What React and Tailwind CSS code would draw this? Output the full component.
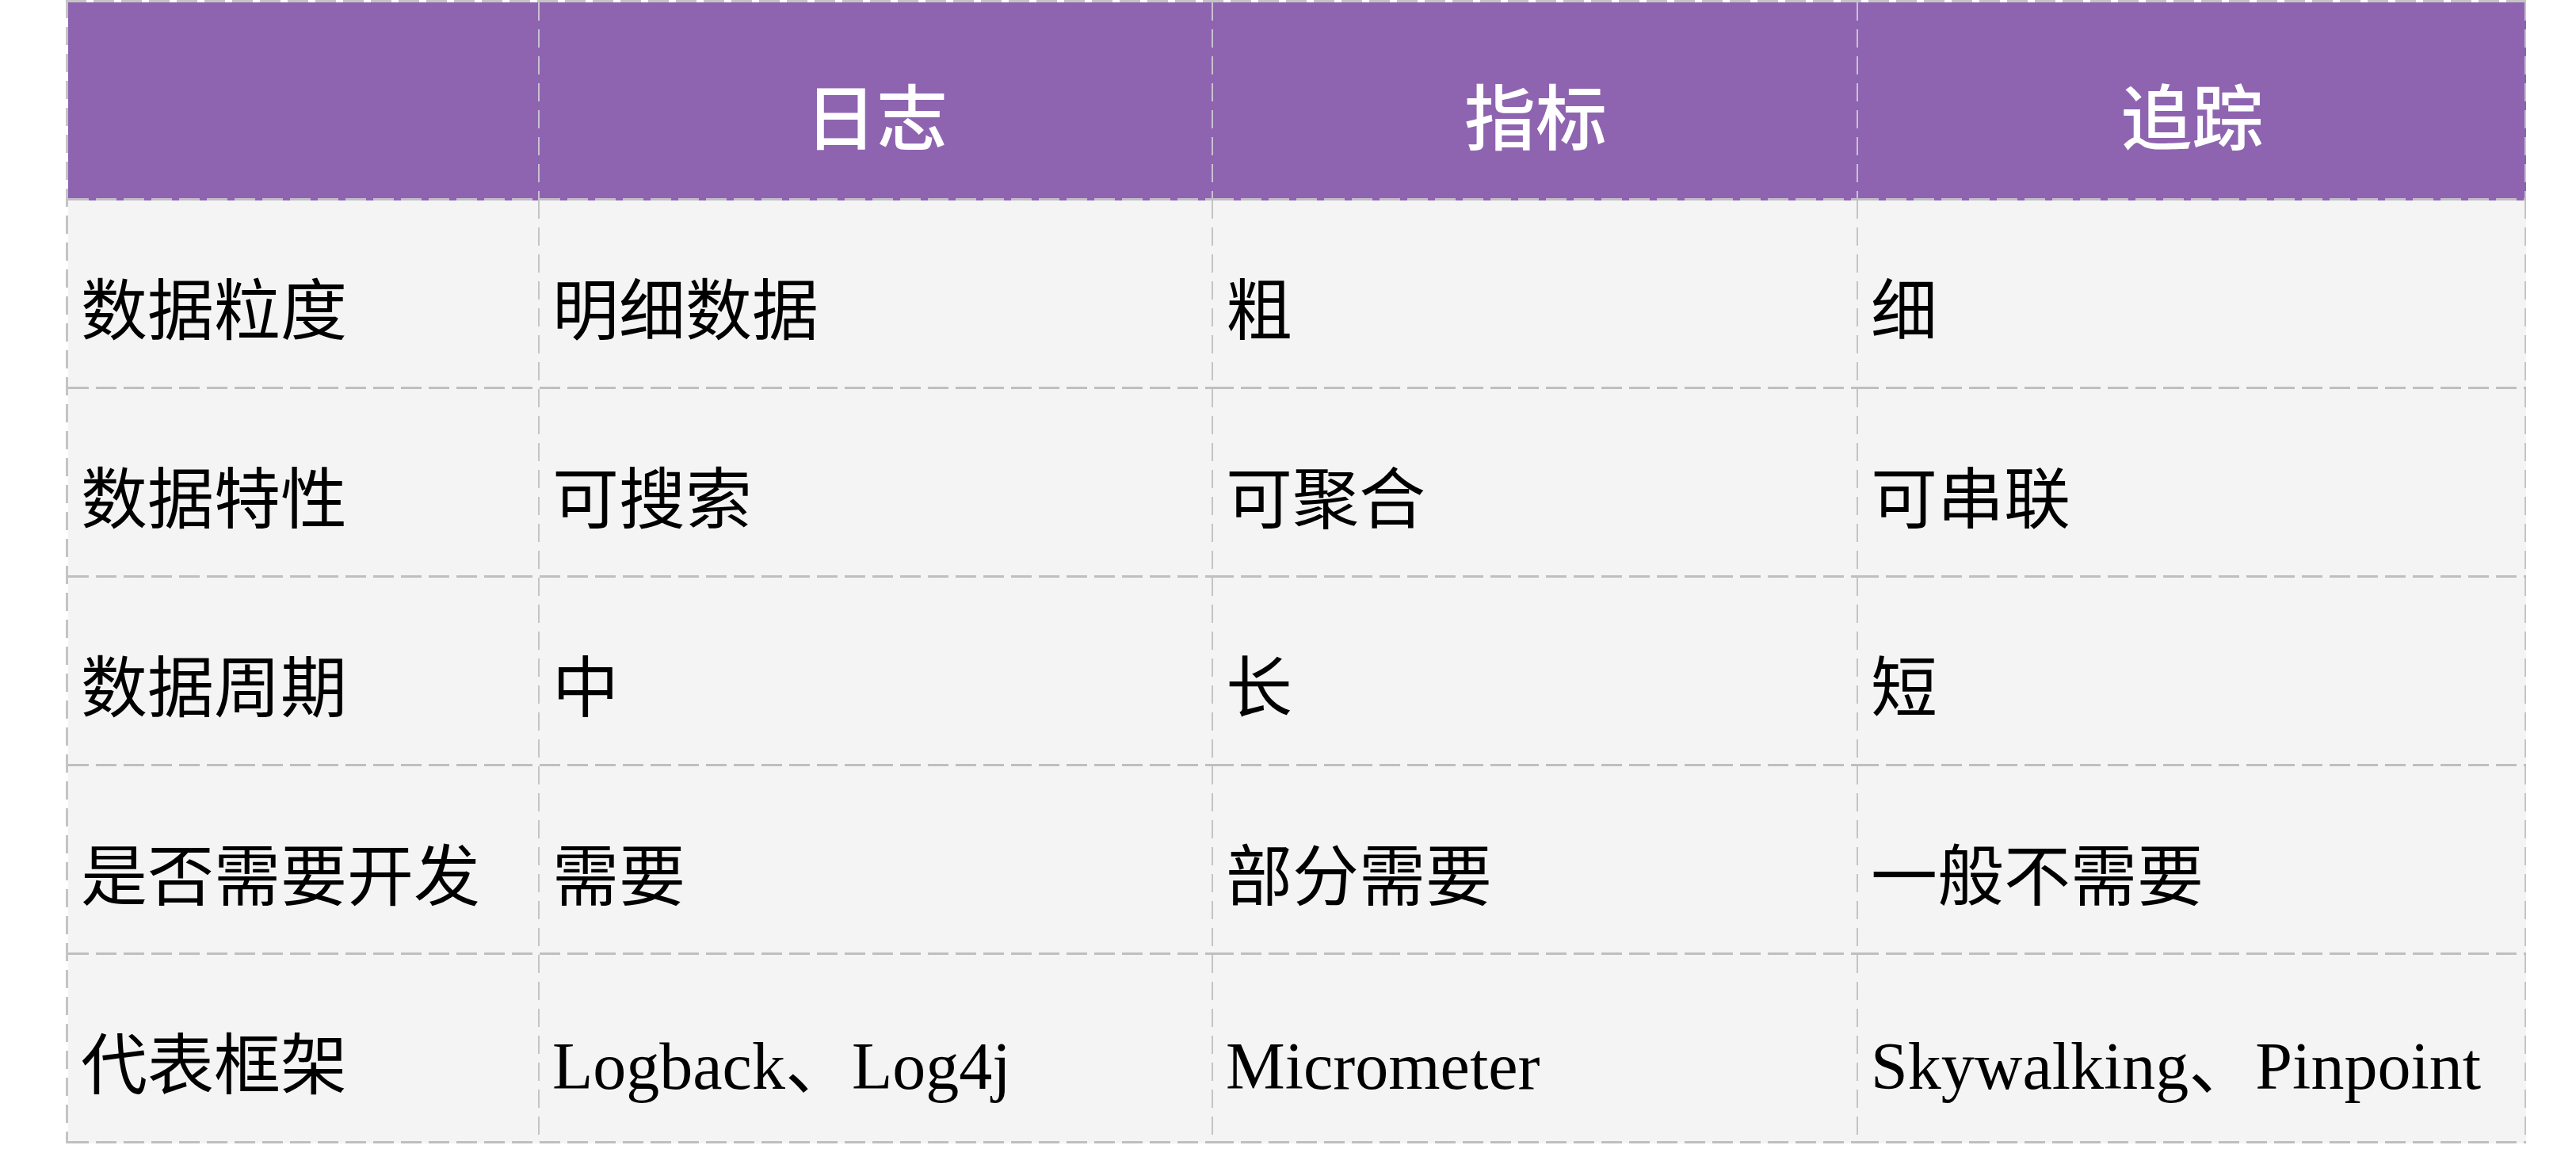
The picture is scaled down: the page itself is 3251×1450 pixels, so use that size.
const columns = ["", "日志", "指标", "追踪"];

const rows = [
  ["数据粒度", "明细数据", "粗", "细"],
  ["数据特性", "可搜索", "可聚合", "可串联"],
  ["数据周期", "中", "长", "短"],
  ["是否需要开发", "需要", "部分需要", "一般不需要"],
  ["代表框架", "Logback、Log4j", "Micrometer", "Skywalking、Pinpoint"],
];

const fontStack = "font-['Liberation_Serif','Noto_Sans_CJK_SC',serif]";

// dashed right + bottom edges drawn as repeating gradients (longer dashes than border-dashed)
const bodyEdges =
  "bg-[repeating-linear-gradient(90deg,#bfbfbf_0_26px,transparent_26px_35px),repeating-linear-gradient(180deg,#c4c4c4_0_23px,transparent_23px_34px)] bg-[length:100%_3px,2px_100%] bg-[position:left_bottom,right_top] bg-no-repeat";

const headEdges =
  "bg-[repeating-linear-gradient(90deg,#c2bcc8_0_26px,transparent_26px_35px),repeating-linear-gradient(180deg,#c9c1d1_0_23px,transparent_23px_34px)] bg-[length:100%_3px,2px_100%] bg-[position:left_bottom,right_top] bg-no-repeat";

const App = () => {
  return (
    <div className="min-h-screen bg-white">
      <div
        className={`ml-[83px] w-[3105px] pl-[3px] pt-[3px] grid grid-cols-[595px_850px_814px_843px] bg-[repeating-linear-gradient(90deg,#c4c4c4_0_26px,transparent_26px_35px),repeating-linear-gradient(180deg,#c4c4c4_0_23px,transparent_23px_34px)] bg-[length:100%_3px,3px_100%] bg-[position:left_top,left_top] bg-no-repeat ${fontStack}`}
      >
        {/* Header */}
        {columns.map((col, i) => (
          <div
            key={`h-${i}`}
            className={`h-[250px] bg-[#8e64b0] ${headEdges} flex items-center justify-center pt-[48px] text-white text-[90px] leading-none font-medium`}
          >
            {col}
          </div>
        ))}

        {/* Body */}
        {rows.map((row, r) =>
          row.map((cell, c) => (
            <div
              key={`${r}-${c}`}
              className={`h-[238px] bg-[#f4f4f4] ${bodyEdges} flex items-center pl-[16px] pt-[44px] text-black text-[84px] leading-none whitespace-nowrap`}
            >
              {cell}
            </div>
          ))
        )}
      </div>
    </div>
  );
};

export default App;
